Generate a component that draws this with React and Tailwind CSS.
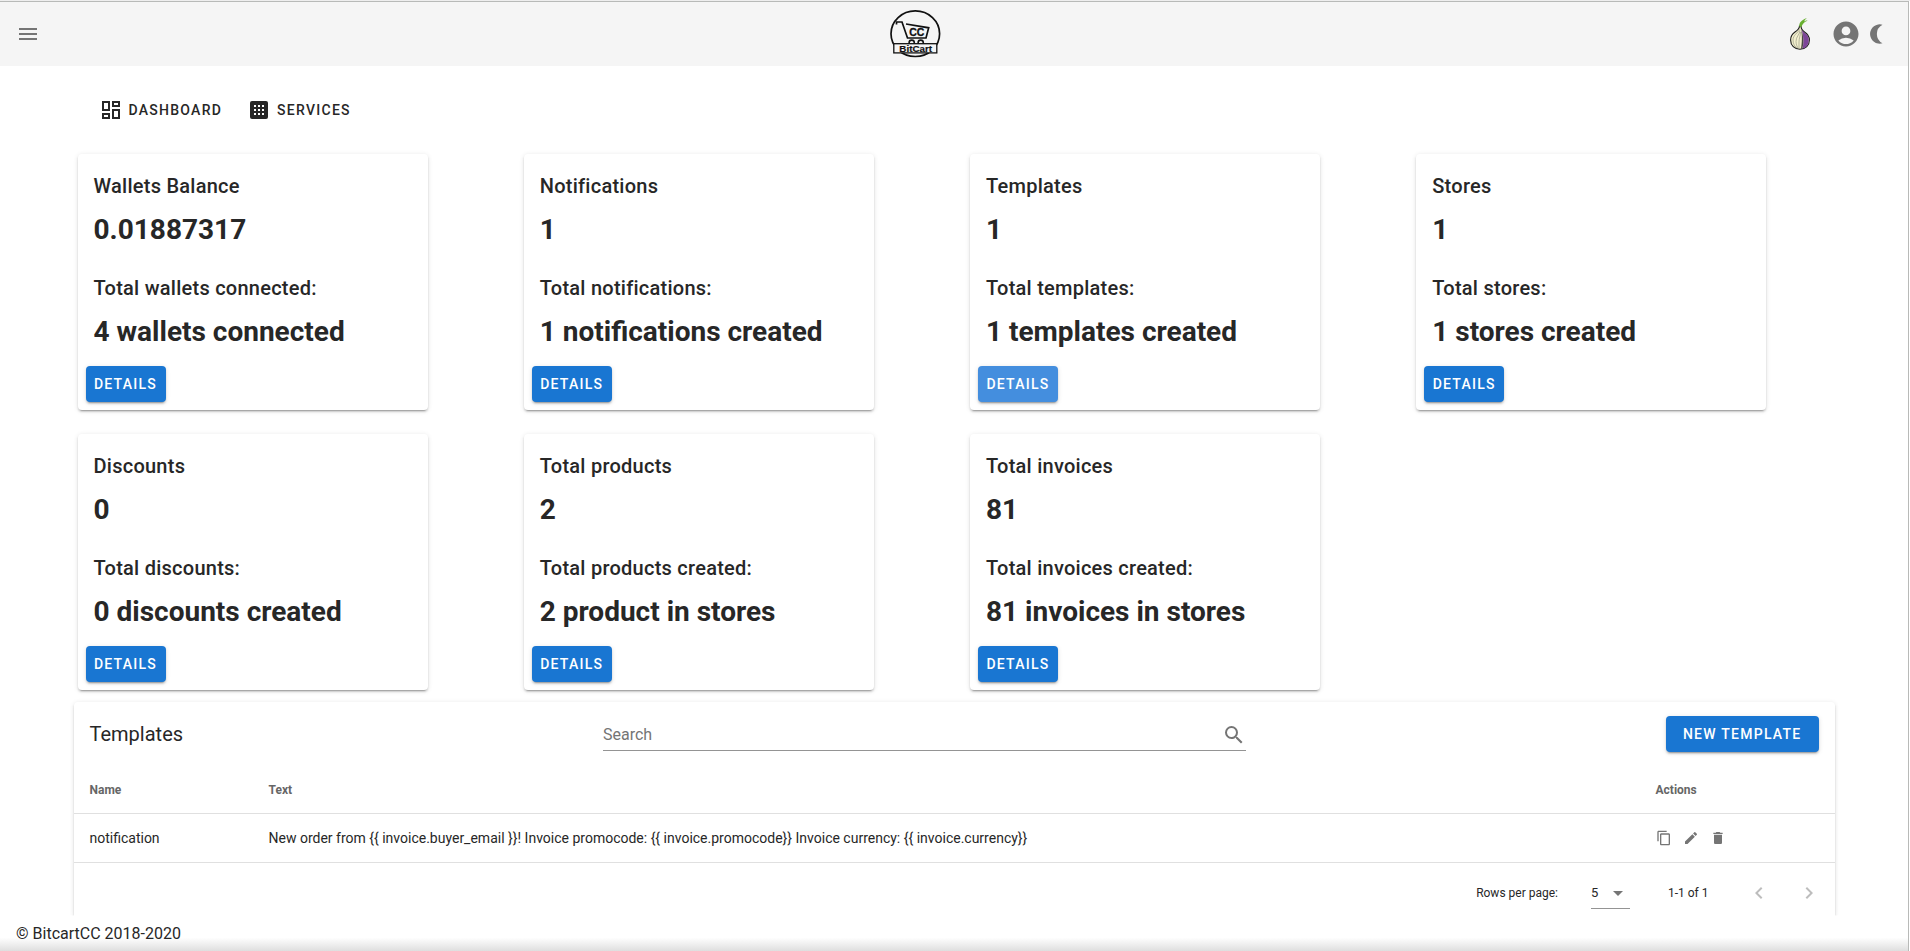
import React from 'react';
import { MdMenu, MdSearch, MdEdit, MdDelete, MdContentCopy, MdChevronLeft, MdChevronRight, MdAccountCircle, MdOutlineDashboard, MdArrowDropDown } from 'react-icons/md';

const cards = [
  { title: 'Wallets Balance', value: '0.01887317', label: 'Total wallets connected:', total: '4 wallets connected' },
  { title: 'Notifications', value: '1', label: 'Total notifications:', total: '1 notifications created' },
  { title: 'Templates', value: '1', label: 'Total templates:', total: '1 templates created', active: true },
  { title: 'Stores', value: '1', label: 'Total stores:', total: '1 stores created' },
  { title: 'Discounts', value: '0', label: 'Total discounts:', total: '0 discounts created' },
  { title: 'Total products', value: '2', label: 'Total products created:', total: '2 product in stores' },
  { title: 'Total invoices', value: '81', label: 'Total invoices created:', total: '81 invoices in stores' },
];

const raised = 'shadow-[0_3px_1px_-2px_rgba(0,0,0,0.2),0_2px_2px_0_rgba(0,0,0,0.14),0_1px_5px_0_rgba(0,0,0,0.12)]';

function Logo() {
  return (
    <svg viewBox="0 0 52 50" className="h-[50px] w-[52px]" role="img" aria-label="BitCart" fill="none" stroke="#111">
      <ellipse cx="26.3" cy="24.7" rx="24.3" ry="22.8" strokeWidth="1.7" />
      <path d="M7.500 15.500V13H13L18.500 29H37L39.700 18.800L17 15" strokeWidth="1.7" />
      <circle cx="22.7" cy="33.7" r="2.6" strokeWidth="1.6" />
      <circle cx="31.7" cy="33.7" r="2.6" strokeWidth="1.6" />
      <rect x="4.800" y="34.700" width="43" height="9.2" fill="#f5f5f5" strokeWidth="1.3" />
      <text x="27.8" y="27" textAnchor="middle" fontFamily="Liberation Sans" fontWeight="700" fontSize="10.5" fill="#111" strokeWidth="0.3">CC</text>
      <text x="26.7" y="42.700" textAnchor="middle" fontFamily="Liberation Sans" fontWeight="700" fontSize="9.8" fill="#111" strokeWidth="0.2">BitCart</text>
    </svg>
  );
}

function Onion() {
  return (
    <svg viewBox="0 0 20 32" className="h-8 w-5" aria-hidden="true">
      <path d="M9.500 8C9.500 10.500 8 12 5 14C2 16 0.600 18.500 0.600 22C0.600 27.500 4.500 31.300 10 31.300C15.500 31.300 19.400 27.500 19.400 22C19.400 18.500 17.500 16 14.500 14C12 12.300 11 10.500 11 8Z" fill="#f2efce" stroke="#1c1c1c" strokeWidth="1.1" />
      <path d="M10.800 10C11.500 12.500 13 13.500 14.500 14.700C17 16.500 18.800 18.800 18.800 22C18.800 26.800 16 30 12.500 30.600C13.800 26 14 17 10.800 10Z" fill="#7d4698" />
      <path d="M10.800 11C14 18 13.800 26 12.300 30.700H11C12 25 12.500 17 10.800 11Z" fill="#4a4a44" />
      <path d="M9.500 11.500C8 15 3 17 3 22C3 26 5 29 7 30M10 12.500C9.500 17 6 18.500 6 23.500C6 27 7.500 29.500 8.500 30.500M10.500 14C10.500 18 9 20 9 24V30.500" fill="none" stroke="#9c9c88" strokeWidth="0.7" />
      <path d="M9.300 8.500C9 5 11 2 17 0C15 1.500 14.500 2.500 14.200 3.500C15.500 2.600 16.500 2.500 17.500 2.700C14 4 12.500 6 11.300 9Z" fill="#68b030" />
    </svg>
  );
}

function Services() {
  return (
    <svg viewBox="0 0 24 24" className="h-6 w-6" aria-hidden="true">
      <rect x="3" y="3" width="18" height="18" rx="2" fill="#272727" />
      <path d="M7 7h2v2H7zM11 7h2v2h-2zM15 7h2v2h-2zM7 11h2v2H7zM11 11h2v2h-2zM15 11h2v2h-2zM7 15h2v2H7zM11 15h2v2h-2zM15 15h2v2h-2z" fill="#fff" />
    </svg>
  );
}

function Card({ title, value, label, total, active }) {
  return (
    <section className={`w-[350px] max-w-full rounded bg-white pb-2 text-xl leading-8 font-medium tracking-[0.0125em] ${raised}`}>
      <div className="px-4 pt-4 pb-[2px]">
        <h2>{title}</h2>
        <p className="pt-3 pb-[26px] text-[28px] leading-8 font-bold tracking-normal">{value}</p>
        <h3>{label}</h3>
        <p className="pt-3 pb-4 text-[28px] leading-8 font-bold tracking-normal">{total}</p>
      </div>
      <div className="flex px-2">
        <button type="button" className={`h-9 w-20 rounded text-sm font-medium tracking-[0.09em] text-white ${active ? 'bg-[#448ede]' : 'bg-[#1976d2]'} ${raised}`}>DETAILS</button>
      </div>
    </section>
  );
}

export default function App() {
  return (
    <div className="relative flex min-h-screen flex-col border-t border-[#eeeeee] bg-white text-[#272727] [font-family:Roboto,sans-serif]">
      <div className="mr-px flex grow flex-col border-t border-r border-[#b8bab8]">
        <header className="flex h-16 items-center justify-between bg-[#f5f5f5] pr-[25px] pl-4 text-[#757575]">
          <button type="button" aria-label="Menu"><MdMenu size={24} /></button>
          <a href="#home"><Logo /></a>
          <div className="flex items-center">
            <a href="#tor" aria-label="Tor" className="mr-[21px]"><Onion /></a>
            <button type="button" aria-label="Account"><MdAccountCircle size={30} /></button>
            <button type="button" aria-label="Dark theme" className="ml-2">
              <svg viewBox="0 0 14 20" className="h-5 w-[14px]"><path d="M13.500 0.700A9.700 9.700 0 1 0 13.500 19.300A10.500 10.500 0 0 1 13.500 0.700Z" fill="#757575" /></svg>
            </button>
          </div>
        </header>
        <main className="mx-auto w-full max-w-[1785px] grow px-3">
          <nav className="flex h-[88px] items-center gap-[25px] px-[25px] text-sm font-medium tracking-[0.09em]">
            <a href="#dashboard" className="flex items-center gap-1.5"><MdOutlineDashboard size={24} />DASHBOARD</a>
            <a href="#services" className="flex items-center gap-1.5"><Services />SERVICES</a>
          </nav>
          <div className="-mx-3 grid grid-cols-4 gap-y-6">
            {cards.map((card) => (
              <div key={card.title} className="px-4"><Card {...card} /></div>
            ))}
          </div>
          <section className={`mt-3 rounded-t [clip-path:inset(-4px_-4px_0_-4px)] ${raised}`}>
            <div className="flex h-16 items-center justify-between px-4">
              <h2 className="text-xl">Templates</h2>
              <label className="mt-0.5 flex h-8 w-[643px] items-center border-b border-[#949494]">
                <input type="text" placeholder="Search" aria-label="Search" className="min-w-0 grow outline-none placeholder:text-[#757575]" />
                <MdSearch size={24} className="text-[#757575]" />
              </label>
              <button type="button" className={`h-9 rounded bg-[#1976d2] px-[17px] text-sm font-medium tracking-[0.09em] text-white ${raised}`}>NEW TEMPLATE</button>
            </div>
            <table className="w-full text-left text-sm">
              <thead className="text-xs text-[#666666]">
                <tr className="h-[47px] border-b border-[#e0e0e0]">
                  <th className="w-[179px] px-4 pt-0.5 font-bold">Name</th>
                  <th className="px-4 pt-0.5 font-bold">Text</th>
                  <th className="w-[195px] px-4 pt-0.5 font-bold">Actions</th>
                </tr>
              </thead>
              <tbody>
                <tr className="h-[49px] border-b border-[#e0e0e0]">
                  <td className="px-4">notification</td>
                  <td className="px-4">{'New order from {{ invoice.buyer_email }}! Invoice promocode: {{ invoice.promocode}} Invoice currency: {{ invoice.currency}}'}</td>
                  <td className="px-4">
                    <div className="flex items-center gap-[11px] text-[#757575]">
                      <button type="button" aria-label="Copy"><MdContentCopy size={16} /></button>
                      <button type="button" aria-label="Edit"><MdEdit size={16} /></button>
                      <button type="button" aria-label="Delete"><MdDelete size={16} /></button>
                    </div>
                  </td>
                </tr>
              </tbody>
            </table>
            <div className="flex h-[53px] items-center justify-end pt-2 pr-[14px] text-xs">
              <label htmlFor="rows">Rows per page:</label>
              <div className="relative ml-[33px] flex h-8 w-[39px] items-center border-b border-[#949494]">
                <select id="rows" className="w-full appearance-none text-[13px] outline-none"><option>5</option></select>
                <MdArrowDropDown size={24} className="pointer-events-none absolute right-0 text-[#757575]" />
              </div>
              <span className="ml-[38px]">1-1 of 1</span>
              <button type="button" aria-label="Previous page" className="ml-[38px] text-[#bdbdbd]"><MdChevronLeft size={24} /></button>
              <button type="button" aria-label="Next page" className="ml-[26px] text-[#bdbdbd]"><MdChevronRight size={24} /></button>
            </div>
          </section>
        </main>
        <footer className="h-9 bg-linear-to-b from-white from-60% to-[#dcdcdc] px-4 leading-9">© BitcartCC 2018-2020</footer>
      </div>
    </div>
  );
}
